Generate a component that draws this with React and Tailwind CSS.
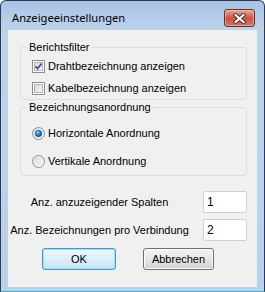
import React from 'react';

const font = "font-['Liberation_Sans',Arial,sans-serif] text-[11px] text-black";

const CloseButton = () => (
  <div className="w-[31px] h-[18px] rounded-[3px] border border-[#6f2a22] bg-linear-to-b from-[#e8a89c] via-[#c9553f] to-[#d77463] flex items-center justify-center shadow-[inset_0_0_0_1px_rgba(255,220,210,0.45)]">
    <svg width="13" height="11" viewBox="0 0 13 11">
      <path d="M2.5 2 L10.5 9 M10.5 2 L2.5 9" stroke="#4a2a28" strokeWidth="4" strokeLinecap="square" />
      <path d="M2.5 2 L10.5 9 M10.5 2 L2.5 9" stroke="#ffffff" strokeWidth="2.2" strokeLinecap="square" />
    </svg>
  </div>
);

const CheckBox = ({ checked }) => (
  <span className="relative w-[13px] h-[13px] shrink-0 border border-[#8e8f8f] bg-white p-px flex">
    <span className="flex-1 border border-[#b3b6ba] bg-linear-to-br from-[#d8d9da] to-[#f7f7f7]" />
    {checked && (
      <svg className="absolute left-0 top-0" width="11" height="11" viewBox="0 0 11 11">
        <path d="M2.5 5.2 L4.6 7.6 L8.6 2.6" fill="none" stroke="#41568f" strokeWidth="1.7" />
      </svg>
    )}
  </span>
);

const Radio = ({ checked, id }) => (
  <svg width="13" height="13" viewBox="0 0 13 13" className="shrink-0">
    <defs>
      <linearGradient id={`rb${id}`} x1="0" y1="0" x2="1" y2="1">
        <stop offset="0" stopColor="#d4d4d4" />
        <stop offset="1" stopColor="#fbfbfb" />
      </linearGradient>
      <radialGradient id={`rd${id}`} cx="0.4" cy="0.35" r="0.7">
        <stop offset="0" stopColor="#8fd3f7" />
        <stop offset="0.5" stopColor="#2a86c9" />
        <stop offset="1" stopColor="#0d4a8a" />
      </radialGradient>
    </defs>
    <circle cx="6.5" cy="6.5" r="6" fill={`url(#rb${id})`} stroke="#8e8f8f" />
    <circle cx="6.5" cy="6.5" r="4.5" fill="none" stroke="#f4f4f4" strokeWidth="0.8" />
    {checked && <circle cx="6.5" cy="6.5" r="3.3" fill={`url(#rd${id})`} stroke="#1e4f80" strokeWidth="0.6" />}
  </svg>
);

const GroupBox = ({ title, className, children }) => (
  <div className={`relative mx-[12px] mr-[10px] border border-[#d5dfe5] rounded-[3px] ${className}`}>
    <span className="absolute left-[6px] top-[-7px] px-[2px] bg-[#f0f0f0] leading-[13px]">{title}</span>
    {children}
  </div>
);

const TextField = ({ value }) => (
  <div className="w-[44px] h-[22px] bg-white border border-[#cdd1d6] rounded-[2px] flex items-center pl-[3px] text-[12px]">
    {value}
  </div>
);

export default function App() {
  return (
    <div className={`w-[265px] h-[292px] ${font} border border-[#2f3b4d] border-b-[#3fb1d6] rounded-t-[6px] bg-linear-to-b from-[#a8c3e5] via-[#bdd3ec] via-[10%] to-[#bad1eb] flex flex-col px-[7px] pb-[4px] overflow-hidden`}>
      {/* Title bar */}
      <div className="h-[29px] shrink-0 flex items-start justify-between">
        <span className="pl-[4px] pt-[9px] font-['Noto_Sans',sans-serif] text-[11.2px] leading-[15px] text-black">
          Anzeigeeinstellungen
        </span>
        <div className="mt-[8px] mr-[2px]">
          <CloseButton />
        </div>
      </div>

      {/* Client area */}
      <div className="flex-1 bg-[#f0f0f0] flex flex-col">
        <GroupBox title="Berichtsfilter" className="mt-[17px] pt-[12px] pb-[4px] pl-[11px] flex flex-col gap-[9px]">
          <label className="flex items-center gap-[3px] h-[13px]">
            <CheckBox checked />
            <span>Drahtbezeichnung anzeigen</span>
          </label>
          <label className="flex items-center gap-[3px] h-[13px]">
            <CheckBox />
            <span>Kabelbezeichnung anzeigen</span>
          </label>
        </GroupBox>

        <GroupBox title="Bezeichnungsanordnung" className="mt-[7px] pt-[19px] pb-[7px] pl-[11px] flex flex-col gap-[15px]">
          <label className="flex items-center gap-[3px] h-[13px]">
            <Radio id="1" checked />
            <span>Horizontale Anordnung</span>
          </label>
          <label className="flex items-center gap-[3px] h-[13px]">
            <Radio id="2" />
            <span>Vertikale Anordnung</span>
          </label>
        </GroupBox>

        <div className="mt-[15px] flex flex-col gap-[6px]">
          <div className="flex items-center gap-[12px] mr-[10px]">
            <span className="flex-1 text-center">Anz. anzuzeigender Spalten</span>
            <TextField value="1" />
          </div>
          <div className="flex items-center gap-[12px] mr-[10px]">
            <span className="flex-1 text-center">Anz. Bezeichnungen pro Verbindung</span>
            <TextField value="2" />
          </div>
        </div>

        <div className="mt-[7px] flex gap-[27px] pl-[34px]">
          <button className="w-[74px] h-[22px] rounded-[3px] border border-[#3c9bd6] bg-linear-to-b from-[#eef7fc] via-[#dcf0fa] via-[50%] to-[#c3e3f3] shadow-[inset_0_0_0_1px_#a9dcf5] text-[11px]">
            OK
          </button>
          <button className="w-[71px] h-[22px] rounded-[3px] border border-[#707070] bg-linear-to-b from-[#f3f3f3] via-[#e6e6e6] via-[50%] to-[#d2d2d2] shadow-[inset_0_0_0_1px_#fbfbfb] text-[11px]">
            Abbrechen
          </button>
        </div>
      </div>
    </div>
  );
}
